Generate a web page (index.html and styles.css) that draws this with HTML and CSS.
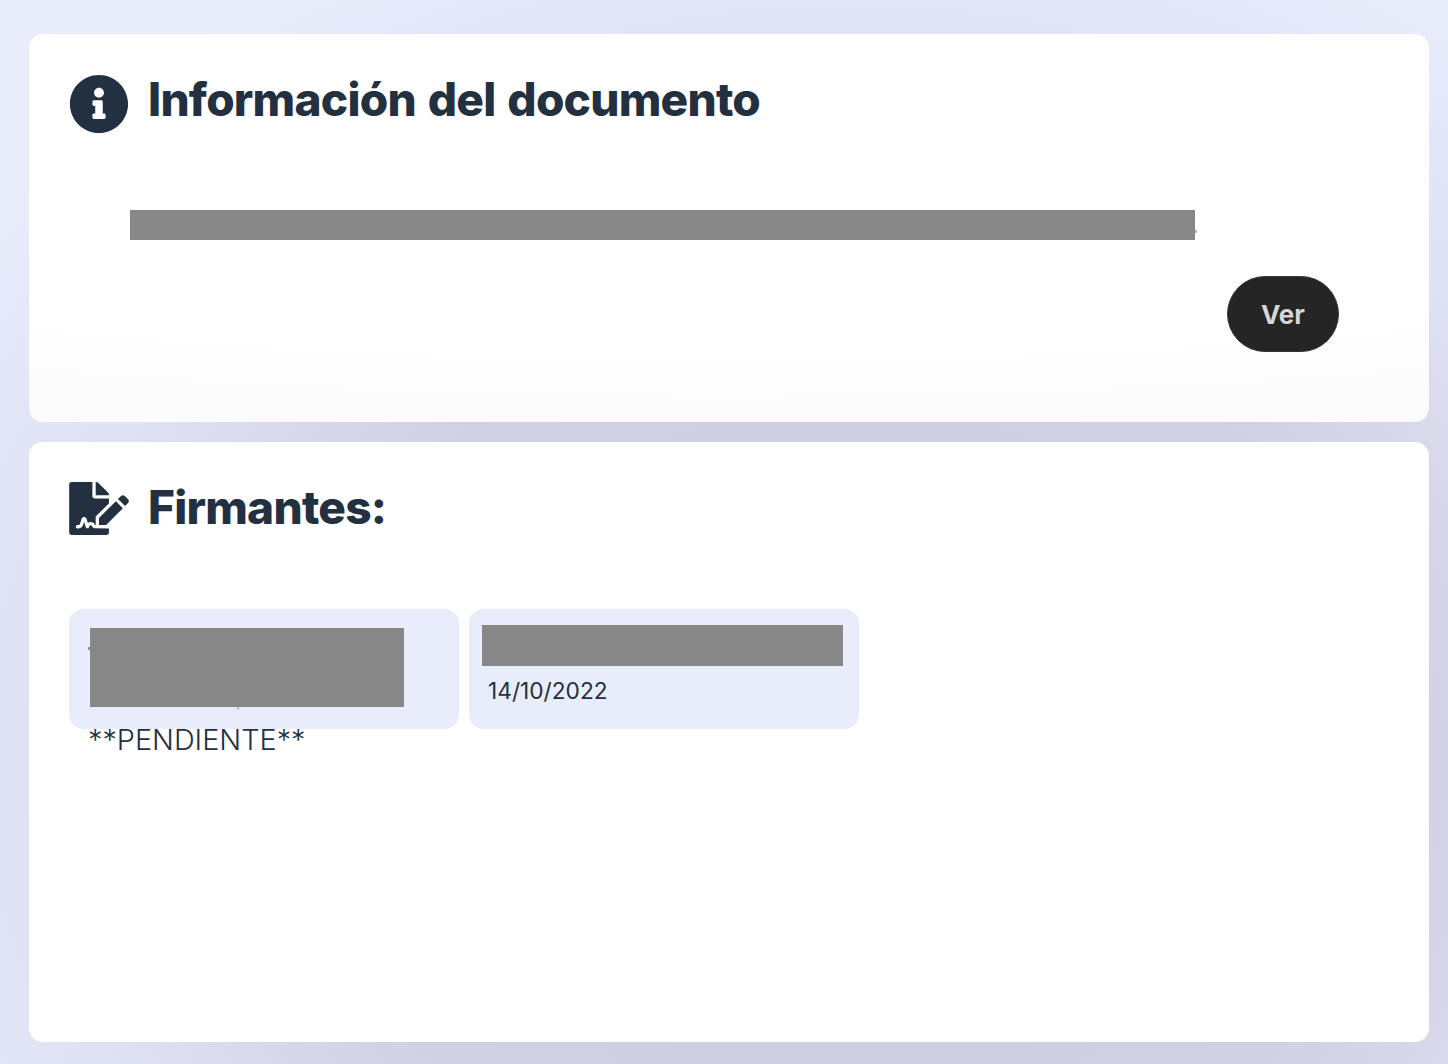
FILE: index.html
```html
<!DOCTYPE html>
<html lang="es">
    <head>
        <title>Información del documento</title>
        <link rel="stylesheet" href="styles.css">
    </head>
    <body>

        <!-- Document info -->
        <section class="card card-info">
            <div class="card-title">
                <svg class="icon-info" viewBox="0 0 512 512"><path d="M256 8C119.043 8 8 119.083 8 256c0 136.997 111.043 248 248 248s248-111.003 248-248C504 119.083 392.957 8 256 8zm0 110c23.196 0 42 18.804 42 42s-18.804 42-42 42-42-18.804-42-42 18.804-42 42-42zm56 254c0 6.627-5.373 12-12 12h-88c-6.627 0-12-5.373-12-12v-24c0-6.627 5.373-12 12-12h12v-64h-12c-6.627 0-12-5.373-12-12v-24c0-6.627 5.373-12 12-12h64c6.627 0 12 5.373 12 12v100h12c6.627 0 12 5.373 12 12v24z"/></svg>
                <h2>Información del documento</h2>
            </div>
            <div class="redacted redacted-name"></div>
            <div class="actions">
                <button class="btn-ver">Ver</button>
            </div>
        </section>

        <!-- Signers -->
        <section class="card card-signers">
            <div class="card-title">
                <svg class="icon-sign" viewBox="0 0 576 512"><path d="M218.17 424.14c-2.95-5.92-8.09-6.52-10.17-6.52s-7.22.59-10.02 6.19l-7.67 15.34c-6.37 12.78-25.03 11.37-29.48-2.09L144 386.59l-10.61 31.88c-5.89 17.66-22.38 29.53-41 29.53H80c-8.84 0-16-7.16-16-16s7.16-16 16-16h12.39c4.83 0 9.11-3.08 10.64-7.66l18.19-54.64c3.3-9.81 12.44-16.41 22.78-16.41s19.48 6.59 22.77 16.41l13.88 41.64c19.75-16.19 54.06-9.7 66 14.16 1.89 3.78 5.49 5.95 9.36 6.26v-82.12l128-127.09V160H248c-13.2 0-24-10.8-24-24V0H24C10.7 0 0 10.7 0 24v464c0 13.3 10.7 24 24 24h336c13.3 0 24-10.7 24-24v-40l-128-.11c-16.12-.31-30.58-9.28-37.83-23.75zM384 121.9c0-6.3-2.5-12.4-7-16.9L279.1 7c-4.5-4.5-10.6-7-17-7H256v128h128v-6.1zm-96 225.06V416h68.99l161.68-162.78-67.88-67.88L288 346.96zm280.54-179.63l-31.87-31.87c-9.94-9.94-26.07-9.94-36.01 0l-27.25 27.25c-1.11 1.11-1.11 2.9 0 4.01l63.83 63.83c1.11 1.11 2.9 1.11 4.01 0l27.25-27.25c9.97-9.95 9.97-26.07.04-35.97z"/></svg>
                <h2>Firmantes:</h2>
            </div>
            <div class="signers">
                <div class="signer signer-pending">
                    <div class="redacted redacted-signer"></div>
                    <p class="status">**PENDIENTE**</p>
                </div>
                <div class="signer signer-signed">
                    <div class="redacted redacted-signed"></div>
                    <p class="date">14/10/2022</p>
                </div>
            </div>
        </section>

    </body>
</html>
```

FILE: styles.css
```css
html {
    height: 100%;
}

body {
    margin: 0;
    padding: 34px 19px 22px 29px;
    min-height: 100%;
    box-sizing: border-box;
    display: flex;
    flex-direction: column;
    gap: 20px;
    font-family: Inter, "Liberation Sans", sans-serif;
    color: #223040;
    background-color: #e9ecfb;
    background-image: radial-gradient(ellipse 1100px 900px at 850px 760px, #cacadd 0%, #d0d1e3 50%, #dfe2f3 75%, #e9ecfb 100%);
}

.card {
    background-color: #fff;
    border-radius: 14px;
    padding: 40px;
    box-sizing: border-box;
}

.card-info {
    height: 388px;
    background-image: radial-gradient(ellipse 1700px 288px at 50% 100px, #fff 76%, #fbfbfb 100%);
}

.card-signers {
    height: 600px;
}

.card-title {
    display: flex;
    align-items: flex-start;
    gap: 19px;
}

.card-title h2 {
    margin: 0;
    font-size: 46px;
    font-weight: 800;
    line-height: 50px;
    letter-spacing: -0.75px;
    word-spacing: 2.5px;
}

.card-title svg {
    fill: #223040;
    flex: none;
}

.icon-info {
    width: 60px;
    height: 60px;
}

.icon-sign {
    width: 60px;
    height: 53px;
}

.redacted {
    background-color: #878787;
    position: relative;
}

/* bits of the text left showing around the grey boxes */
.redacted-name {
    width: 1065px;
    height: 30px;
    margin: 76px 0 0 61px;
}

.redacted-name::after {
    content: "";
    position: absolute;
    right: -2px;
    top: 20px;
    width: 2px;
    height: 3px;
    background-color: #b4b8bf;
}

.actions {
    display: flex;
    justify-content: flex-end;
    margin: 36px 50px 0 0;
}

.btn-ver {
    width: 112px;
    height: 76px;
    border-radius: 38px;
    border: 1px solid #363636;
    background-color: #252525;
    color: #d6d6d6;
    font-family: inherit;
    font-size: 26px;
    font-weight: 700;
    padding: 0;
}

.signers {
    display: flex;
    gap: 10px;
    margin-top: 74px;
}

.signer {
    width: 390px;
    height: 120px;
    box-sizing: border-box;
    background-color: #e9edfb;
    border-radius: 14px;
}

.signer-pending {
    padding: 19px 21px;
}

.signer-signed {
    padding: 16px 13px;
}

.redacted-signer {
    width: 314px;
    height: 79px;
}

.redacted-signer::after {
    content: "";
    position: absolute;
    left: -2px;
    top: 19px;
    width: 2px;
    height: 3px;
    background-color: #8a909b;
    box-shadow: 0 49px 0 -1px #a0a5af, 149px 60px 0 -0.5px #6d7583;
}

.redacted-signed {
    width: 361px;
    height: 41px;
}

.status {
    margin: 15px 0 0 -2px;
    font-size: 28.8px;
    font-weight: 350;
    line-height: 36px;
}

.date {
    margin: 11px 0 0 6px;
    font-size: 22.7px;
    line-height: 28px;
}
```
